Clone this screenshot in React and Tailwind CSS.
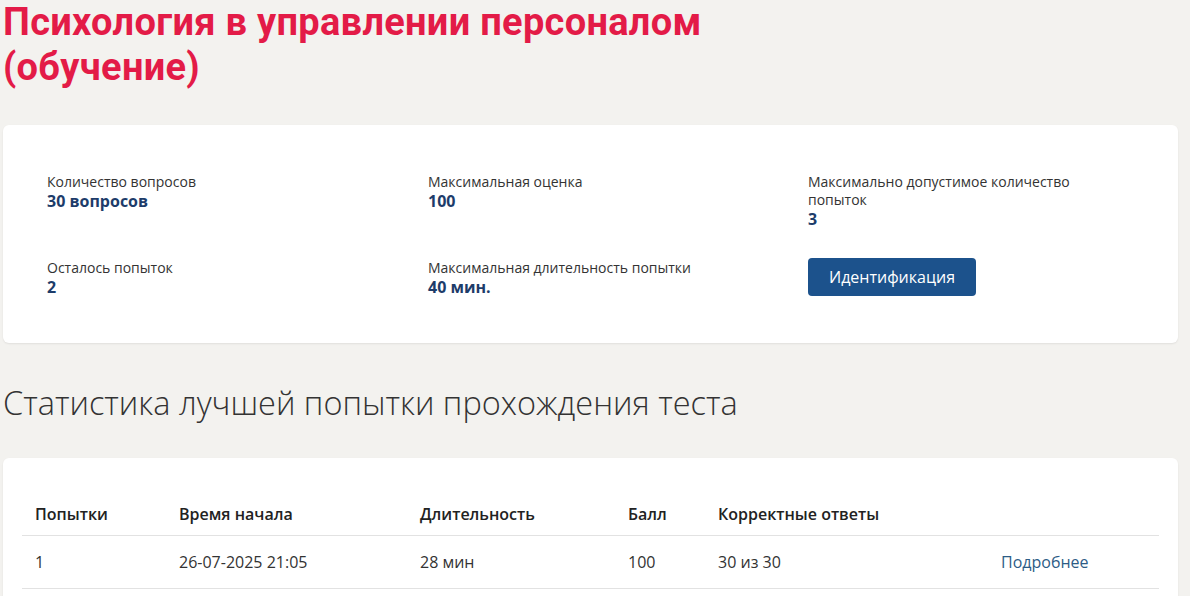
export default function App() {
  const info = [
    { label: 'Количество вопросов', value: '30 вопросов' },
    { label: 'Максимальная оценка', value: '100' },
    { label: 'Максимально допустимое количество попыток', value: '3' },
    { label: 'Осталось попыток', value: '2' },
    { label: 'Максимальная длительность попытки', value: '40 мин.' },
  ];

  const attempts = [
    { n: 1, start: '26-07-2025 21:05', duration: '28 мин', score: 100, correct: '30 из 30' },
  ];

  return (
    <div className="min-h-[596px] bg-[#f3f2ef] px-[3px] pb-10 text-[#333]" style={{ fontFamily: '"Open Sans", "Noto Sans", sans-serif' }}>
      <h1 className="text-[38px] font-bold leading-[45px] tracking-[0.3px] text-[#e31b47]" style={{ fontFamily: 'Roboto, "Noto Sans", sans-serif' }}>
        Психология в управлении персоналом
        <br />
        (обучение)
      </h1>

      <section className="mt-[35px] w-[1175px] rounded-md bg-white pt-[48px] pb-[46px] pl-[44px] shadow-[0_1px_2px_rgba(0,0,0,0.08)]">
        <div className="grid grid-cols-[381px_380px_1fr] gap-y-[30px]">
          {info.map((item) => (
            <div key={item.label}>
              <p className="max-w-[290px] text-[14px] leading-[18px] text-[#333]">{item.label}</p>
              <p className="text-[16px] font-bold leading-[20px] text-[#1d3c6a]">{item.value}</p>
            </div>
          ))}
          <div className="-mt-[1px]">
            <button className="h-[38px] w-[168px] rounded-[4px] bg-[#1c528c] text-[16px] text-white">Идентификация</button>
          </div>
        </div>
      </section>

      <h2 className="mt-[38px] text-[32.5px] font-light leading-[44px] text-[#333]" style={{ fontFamily: '"Open Sans", sans-serif' }}>
        Статистика лучшей попытки прохождения теста
      </h2>

      <section className="mt-[33px] w-[1175px] rounded-md bg-white px-[19px] pt-[35px] pb-6 shadow-[0_1px_2px_rgba(0,0,0,0.08)]">
        <table className="w-full text-left text-[16px]">
          <thead>
            <tr className="border-b border-[#e2e2e2]">
              <th className="w-[157px] py-[9px] pl-[13px] font-semibold text-[#222]">Попытки</th>
              <th className="w-[241px] py-[9px] font-semibold text-[#222]">Время начала</th>
              <th className="w-[208px] py-[9px] font-semibold text-[#222]">Длительность</th>
              <th className="w-[90px] py-[9px] font-semibold text-[#222]">Балл</th>
              <th className="w-[283px] py-[9px] font-semibold text-[#222]">Корректные ответы</th>
              <th className="py-[9px]"></th>
            </tr>
          </thead>
          <tbody>
            {attempts.map((a) => (
              <tr key={a.n} className="border-b border-[#e2e2e2]">
                <td className="py-[14px] pl-[13px]">{a.n}</td>
                <td className="py-[14px]">{a.start}</td>
                <td className="py-[14px]">{a.duration}</td>
                <td className="py-[14px]">{a.score}</td>
                <td className="py-[14px]">{a.correct}</td>
                <td className="py-[14px]"><a href="#" className="text-[#2d5c86]">Подробнее</a></td>
              </tr>
            ))}
          </tbody>
        </table>
      </section>
    </div>
  );
}
